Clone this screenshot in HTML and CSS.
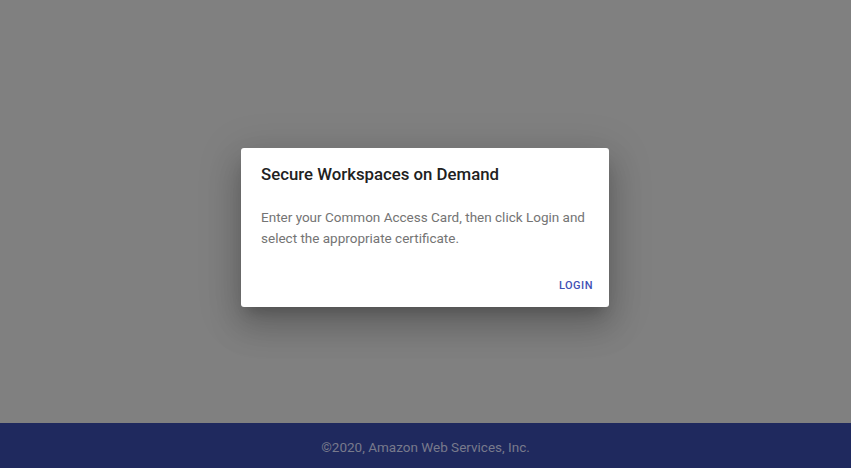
FILE: index.html
```html
<!DOCTYPE html>
<html lang="en">
<head>
<meta charset="utf-8">
<title>Secure Workspaces on Demand</title>
<link rel="stylesheet" href="styles.css">
</head>
<body>
<div class="page">
  <main class="overlay">
    <div class="dialog" role="dialog">
      <h2 class="dialog-title">Secure Workspaces on Demand</h2>
      <p class="dialog-content">Enter your Common Access Card, then click Login and select the appropriate certificate.</p>
      <div class="dialog-actions">
        <button class="btn-login" type="button">LOGIN</button>
      </div>
    </div>
  </main>
  <footer class="footer">©2020, Amazon Web Services, Inc.</footer>
</div>
</body>
</html>
```

FILE: styles.css
```css
* { box-sizing: border-box; }
html, body { margin: 0; padding: 0; height: 100%; }
body {
  font-family: Roboto, "Noto Sans", "Liberation Sans", sans-serif;
  background: #808080;
}
.page {
  display: flex;
  flex-direction: column;
  height: 468px;
}
.overlay {
  flex: 1;
  display: flex;
  justify-content: flex-start;
  align-items: flex-start;
  padding: 148px 0 0 241px;
  background: #808080;
}
.dialog {
  width: 368px;
  background: #ffffff;
  border-radius: 3px;
  padding: 16px 16px 11px 20px;
  box-shadow: 0 10px 13px -6px rgba(0,0,0,.2), 0 20px 32px 3px rgba(0,0,0,.14), 0 8px 40px 7px rgba(0,0,0,.12);
}
.dialog-title {
  margin: 0 0 23px;
  font-size: 16.8px;
  font-weight: 500;
  line-height: 20px;
  color: #212121;
}
.dialog-content {
  margin: 0;
  font-size: 13.5px;
  line-height: 21px;
  color: #747474;
}
.dialog-actions {
  display: flex;
  justify-content: flex-end;
  margin-top: 27px;
}
.btn-login {
  border: 0;
  background: transparent;
  padding: 0;
  font-family: inherit;
  font-size: 11px;
  font-weight: 500;
  line-height: 20px;
  letter-spacing: 0.5px;
  color: #3f51b5;
  cursor: pointer;
}
.footer {
  height: 45px;
  flex: 0 0 45px;
  background: #1f295e;
  color: #787a8c;
  font-size: 13.5px;
  padding-top: 3px;
  display: flex;
  align-items: center;
  justify-content: center;
}
```
